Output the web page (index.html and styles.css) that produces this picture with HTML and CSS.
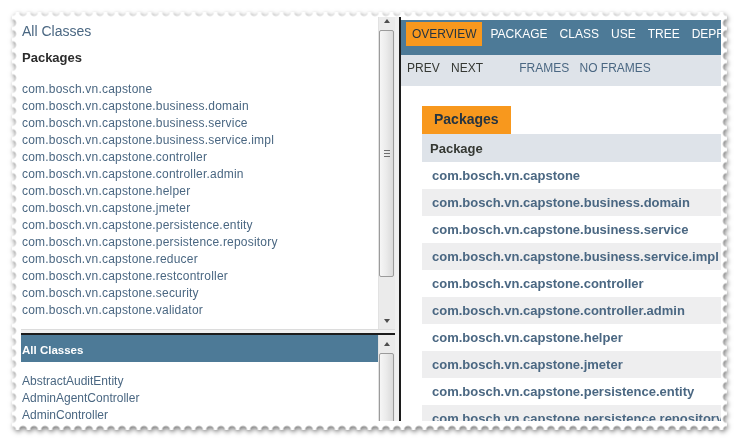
FILE: index.html
```html
<!DOCTYPE html>
<html lang="en">
<head>
<meta charset="utf-8">
<title>Overview</title>
<link rel="stylesheet" href="styles.css">
</head>
<body>
<div class="stamp">
  <div class="paper">
    <div class="frames">
      <div class="left">
        <div class="frame top-frame">
          <div class="frame-body">
            <div class="idx-header"><a class="link">All Classes</a></div>
            <h2 class="idx-title">Packages</h2>
            <ul class="idx-list packages">
              <li>com.bosch.vn.capstone</li>
              <li>com.bosch.vn.capstone.business.domain</li>
              <li>com.bosch.vn.capstone.business.service</li>
              <li>com.bosch.vn.capstone.business.service.impl</li>
              <li>com.bosch.vn.capstone.controller</li>
              <li>com.bosch.vn.capstone.controller.admin</li>
              <li>com.bosch.vn.capstone.helper</li>
              <li>com.bosch.vn.capstone.jmeter</li>
              <li>com.bosch.vn.capstone.persistence.entity</li>
              <li>com.bosch.vn.capstone.persistence.repository</li>
              <li>com.bosch.vn.capstone.reducer</li>
              <li>com.bosch.vn.capstone.restcontroller</li>
              <li>com.bosch.vn.capstone.security</li>
              <li>com.bosch.vn.capstone.validator</li>
            </ul>
          </div>
          <div class="vscroll">
            <div class="sbtn sbtn-top"><span class="tri-up"></span></div>
            <div class="thumb thumb-top"><span class="grip"></span></div>
            <div class="track"></div>
            <div class="sbtn"><span class="tri-down"></span></div>
          </div>
        </div>
        <div class="hsep"></div>
        <div class="frame bottom-frame">
          <div class="frame-body">
            <h1 class="bar">All Classes</h1>
            <ul class="idx-list classes">
              <li>AbstractAuditEntity</li>
              <li>AdminAgentController</li>
              <li>AdminController</li>
            </ul>
          </div>
          <div class="vscroll">
            <div class="sbtn"><span class="tri-up"></span></div>
            <div class="thumb thumb-bottom"></div>
          </div>
        </div>
      </div>
      <div class="vsep"></div>
      <div class="right">
        <div class="topnav">
          <ul class="navlist">
            <li class="current">Overview</li>
            <li>Package</li>
            <li>Class</li>
            <li>Use</li>
            <li>Tree</li>
            <li>Deprecated</li>
          </ul>
        </div>
        <div class="subnav">
          <span>Prev</span>
          <span class="next">Next</span>
          <span class="link frames-link">Frames</span>
          <span class="link noframes-link">No&nbsp;Frames</span>
        </div>
        <div class="content">
          <div class="caption"><span>Packages</span></div>
          <table class="summary">
            <tr><th>Package</th></tr>
            <tr class="row"><td>com.bosch.vn.capstone</td></tr>
            <tr class="alt"><td>com.bosch.vn.capstone.business.domain</td></tr>
            <tr class="row"><td>com.bosch.vn.capstone.business.service</td></tr>
            <tr class="alt"><td>com.bosch.vn.capstone.business.service.impl</td></tr>
            <tr class="row"><td>com.bosch.vn.capstone.controller</td></tr>
            <tr class="alt"><td>com.bosch.vn.capstone.controller.admin</td></tr>
            <tr class="row"><td>com.bosch.vn.capstone.helper</td></tr>
            <tr class="alt"><td>com.bosch.vn.capstone.jmeter</td></tr>
            <tr class="row"><td>com.bosch.vn.capstone.persistence.entity</td></tr>
            <tr class="alt"><td>com.bosch.vn.capstone.persistence.repository</td></tr>
          </table>
        </div>
      </div>
    </div>
  </div>
</div>
</body>
</html>
```
FILE: styles.css
```css
* { box-sizing: border-box; }
html, body { margin: 0; background: #ffffff; }
body {
  padding: 12px;
  font-family: "Liberation Sans", Arial, Helvetica, sans-serif;
  color: #353833;
}
.stamp {
  width: 715px;
  height: 418px;
  filter: drop-shadow(1px 2px 2.5px rgba(0, 0, 0, 0.55));
}
.paper {
  width: 715px;
  height: 418px;
  background: #ffffff;
  padding: 5px 6px 9px 9px;
  -webkit-mask:
    radial-gradient(circle at center, transparent 3.6px, #000 4.3px) -5.5px -5.5px / 11px 11px,
    linear-gradient(#000, #000) center / calc(100% - 10px) calc(100% - 10px) no-repeat;
  mask:
    radial-gradient(circle at center, transparent 3.6px, #000 4.3px) -5.5px -5.5px / 11px 11px,
    linear-gradient(#000, #000) center / calc(100% - 10px) calc(100% - 10px) no-repeat;
}
.frames { display: flex; height: 404px; }
.left { width: 374px; display: flex; flex-direction: column; }
.vsep { width: 6px; background: #f0f0f0; border-right: 2px solid #1c1c1c; }
.right { flex: 1; overflow: hidden; padding-top: 3px; }

.frame { display: flex; overflow: hidden; }
.top-frame { height: 312px; }
.bottom-frame { flex: 1; }
.frame-body { flex: 1; overflow: hidden; background: #fff; }
.hsep { height: 6px; background: #f0f0f0; border-top: 1px solid #dcdcdc; border-bottom: 2px solid #1c1c1c; }

.link { color: #4a6782; text-decoration: none; }
.idx-header { padding: 6px 0 0 1px; font-size: 14px; line-height: 16px; }
.idx-title { margin: 11px 0 0; padding-left: 1px; font-size: 13px; line-height: 16px; font-weight: bold; color: #2c2c2c; }
.idx-list { list-style: none; margin: 15px 0 0; padding: 0 0 0 1px; }
.idx-list li { font-size: 12px; line-height: 17px; color: #4a6782; white-space: nowrap; }
.idx-list.packages li { letter-spacing: 0.2px; }
.idx-list.classes { margin-top: 11px; }
.bar {
  margin: 0;
  height: 27px;
  padding: 8px 0 0 1px;
  font-size: 11.5px;
  line-height: 14px;
  font-weight: bold;
  color: #ffffff;
  background: #4d7a97;
}

/* scrollbars */
.vscroll {
  width: 17px;
  display: flex;
  flex-direction: column;
  background: #ebebeb;
  border-left: 1px solid #e2e2e2;
}
.sbtn { height: 17px; display: flex; align-items: center; justify-content: center; flex-shrink: 0; }
.sbtn-top { height: 12px; align-items: flex-start; padding-top: 2px; }
.tri-up, .tri-down { width: 0; height: 0; border-left: 3.5px solid transparent; border-right: 3.5px solid transparent; }
.tri-up { border-bottom: 4px solid #4e4e4e; }
.tri-down { border-top: 4px solid #4e4e4e; }
.thumb {
  margin: 1px 1px 0 0;
  border: 1px solid #9b9b9b;
  border-radius: 2px;
  background: linear-gradient(to right, #f6f6f6, #ececec 45%, #dadada);
  display: flex;
  align-items: center;
  justify-content: center;
  flex-shrink: 0;
}
.thumb-top { height: 247px; }
.thumb-bottom { height: 120px; }
.track { flex: 1; }
.grip {
  width: 6px;
  height: 1px;
  background: #6f6f6f;
  box-shadow: 0 -3px 0 #6f6f6f, 0 3px 0 #6f6f6f;
}

/* right frame */
.topnav { height: 35px; background: #4d7a97; padding: 2px 0 0 5px; }
.navlist { display: flex; list-style: none; margin: 0; padding: 0; white-space: nowrap; }
.navlist li { padding: 5px 6px; font-size: 12px; line-height: 14px; text-transform: uppercase; color: #ffffff; }
.navlist li.current { background: #f8981d; color: #253441; margin-right: 2px; }
.subnav {
  height: 31px;
  background: #dee3e9;
  padding: 6px 0 0 6px;
  font-size: 12px;
  line-height: 14px;
  text-transform: uppercase;
  white-space: nowrap;
  color: #353833;
}
.subnav .next { margin-left: 8px; }
.subnav .frames-link { margin-left: 33px; }
.subnav .noframes-link { margin-left: 7px; }
.content { padding: 20px 0 0 21px; }
.caption { display: flex; }
.caption span {
  background: #f8981d;
  color: #253441;
  font-size: 14px;
  font-weight: bold;
  line-height: 16px;
  padding: 5px 12px 7px;
}
.summary { border-collapse: collapse; width: 620px; }
.summary th, .summary td {
  text-align: left;
  white-space: nowrap;
  font-size: 13px;
  font-weight: bold;
  line-height: 16px;
  vertical-align: middle;
}
.summary th { background: #dee3e9; height: 28px; padding: 2px 3px 0 8px; color: #353833; }
.summary td { height: 27px; padding: 1px 3px 0 10px; color: #4a6782; }
.summary tr.row { background: #ffffff; }
.summary tr.alt { background: #eeeeef; }
```
